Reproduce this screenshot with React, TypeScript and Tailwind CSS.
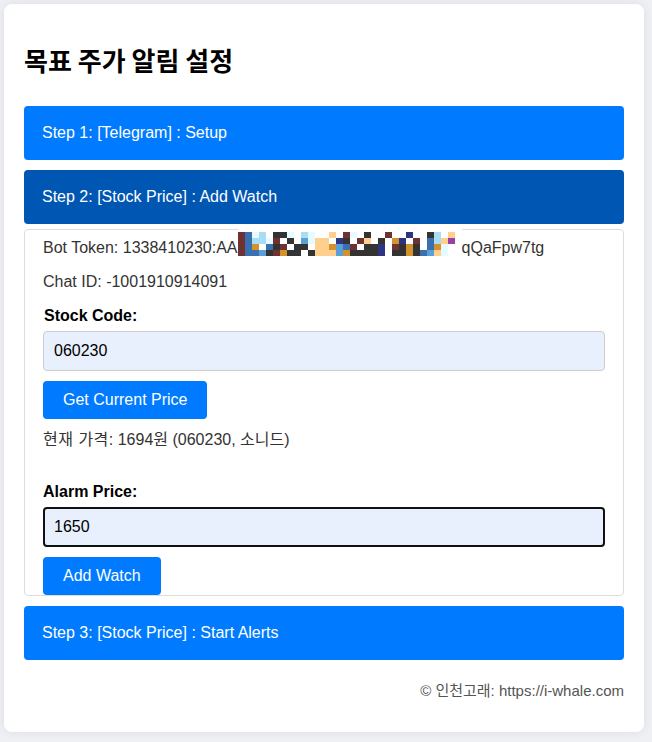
import { useState } from "react";

const PALETTE: Record<string, string> = {
  ".": "#ffffff",
  r: "#6e3232",
  b: "#3a6fb0",
  l: "#a9dcf5",
  p: "#e6fbff",
  k: "#333333",
  o: "#d4922c",
  y: "#ffcf8e",
  n: "#2e3580",
  m: "#9b3fa0",
  c: "#5aa0d8",
};

// redacted part of the token, drawn as a pixel mosaic
const MOSAIC = [
  "................................",
  "rbpl.kkp.lp..y.rp.k..r..n..kl.y.",
  "rbllpr.k.cpyy.nk.ry.k.on.r.blym.",
  "rbo.bkr.kk.yyocbr.kkn.rkok.bop..",
  "rbbckrokk.kyyycokkkkn.kkokbcyp..",
];

function Mosaic() {
  const cell = 7;
  return (
    <svg
      width={224}
      height={28}
      viewBox="0 0 224 28"
      className="inline-block align-top -mt-2"
      shapeRendering="crispEdges"
    >
      {MOSAIC.map((row, y) =>
        row.split("").map((ch, x) => (
          <rect
            key={`${x}-${y}`}
            x={x * cell}
            y={y === 0 ? 0 : 4 + (y - 1) * 6}
            width={cell}
            height={y === 0 ? 4 : 6}
            fill={PALETTE[ch]}
          />
        ))
      )}
    </svg>
  );
}

function StepBar({ label, active = false }: { label: string; active?: boolean }) {
  return (
    <div
      className={
        active
          ? "flex h-[54px] items-center rounded bg-[#0056b3] px-[18px] text-base text-white"
          : "flex h-[54px] items-center rounded bg-[#007bff] px-[18px] text-base text-white"
      }
    >
      {label}
    </div>
  );
}

export default function App() {
  const [code, setCode] = useState("060230");
  const [alarm, setAlarm] = useState("1650");

  return (
    <div className="min-h-[742px] bg-[#eef0f3] p-1 font-['Liberation_Sans','Noto_Sans_CJK_KR',sans-serif]">
      <div className="w-[640px] rounded-lg bg-white px-5 pt-5 pb-8 shadow-[0_0_10px_rgba(0,0,0,0.08)]">
        <h1 className="mt-5 mb-[30px] h-8 text-[26px] leading-8 font-bold text-black font-['Noto_Sans_CJK_KR',sans-serif]">
          목표 주가 알림 설정
        </h1>

        <StepBar label="Step 1: [Telegram] : Setup" />
        <div className="mt-[10px]">
          <StepBar label="Step 2: [Stock Price] : Add Watch" active />
        </div>

        <div className="mt-[5px] rounded border border-[#dddddd] px-[18px] pt-[6px] text-base text-[#333333]">
          <p className="leading-6 whitespace-nowrap">
            Bot Token: 1338410230:AA
            <Mosaic />
            qQaFpw7tg
          </p>
          <p className="mt-[10px] leading-6">Chat ID: -1001910914091</p>

          <label className="mt-[10px] block pl-px leading-6 font-bold text-black">Stock Code:</label>
          <input
            value={code}
            onChange={(e) => setCode(e.target.value)}
            className="mt-[3px] block h-10 w-full rounded border border-[#cccccc] bg-[#e8f0fe] px-[10px] text-base text-black outline-none"
          />
          <button className="mt-[10px] h-[38px] rounded bg-[#007bff] px-5 text-base text-white">
            Get Current Price
          </button>
          <p className="mt-[9px] leading-6">
            <span className="tracking-[0.5px]">현재 가격</span>: 1694원 (060230, 소니드)
          </p>

          <label className="mt-[28px] block leading-6 font-bold text-black">Alarm Price:</label>
          <input
            value={alarm}
            onChange={(e) => setAlarm(e.target.value)}
            className="mt-[3px] block h-10 w-full rounded border-2 border-[#111111] bg-[#e8f0fe] px-[9px] text-base text-black outline-none"
          />
          <button className="mt-[10px] block h-[38px] rounded bg-[#007bff] px-5 text-base text-white">
            Add Watch
          </button>
        </div>

        <div className="mt-[10px]">
          <StepBar label="Step 3: [Stock Price] : Start Alerts" />
        </div>

        <p className="mt-[22px] text-right text-[15px] leading-[18px] text-[#555555]">
          © 인천고래: https://i-whale.com
        </p>
      </div>
    </div>
  );
}
